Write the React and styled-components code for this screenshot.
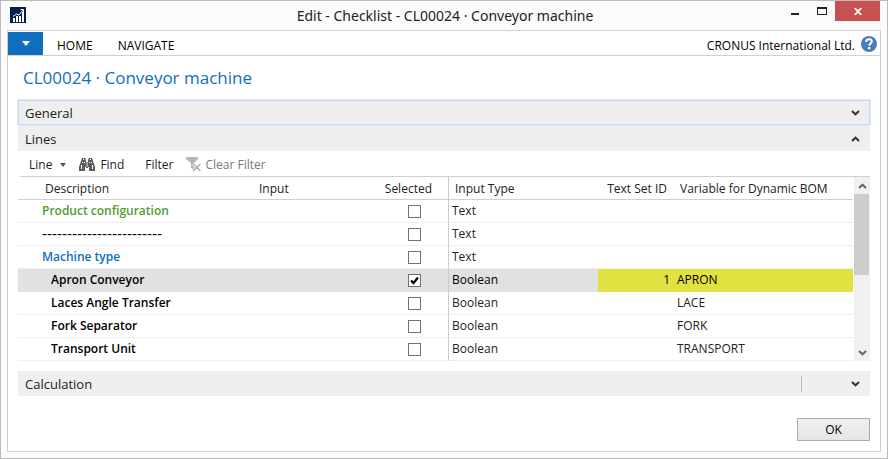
import React, { useState } from 'react';
import styled, { createGlobalStyle, css } from 'styled-components';

const GlobalStyle = createGlobalStyle`
  *, *::before, *::after { box-sizing: border-box; }
  body { margin: 0; font-family: "Open Sans", "Noto Sans", sans-serif; font-size: 12px; color: #222; background: #fbfbfb; }
  button { font: inherit; color: inherit; border: 0; padding: 0; background: none; }
  h1, h2 { margin: 0; font-weight: 400; }
`;

const Window = styled.div`
  display: flex;
  flex-direction: column;
  min-height: 100vh;
  border: 1px solid #bbb;
  background: #fbfbfb;
`;

const TitleBar = styled.header`
  display: grid;
  grid-template-columns: 1fr auto 1fr;
  height: 29px;
  padding: 0 7px 0 9px;
`;

const AppIcon = styled.svg`
  width: 16px;
  height: 16px;
  margin-top: 6px;
`;

const WindowTitle = styled.h1`
  font-family: "Noto Sans", "Open Sans", sans-serif;
  font-size: 14px;
  line-height: 29px;
`;

const Controls = styled.div`
  display: flex;
  justify-content: flex-end;
`;

const Control = styled.button`
  display: grid;
  place-items: center;
  width: ${(p) => (p.$close ? 45 : 27)}px;
  height: 20px;
  background: ${(p) => (p.$close ? '#c75050' : 'none')};
`;

const Frame = styled.main`
  display: flex;
  flex-direction: column;
  flex: 1;
  margin: 0 6px 6px;
  border: 1px solid #d0d0d0;
  background: #fff;
`;

const Ribbon = styled.nav`
  display: flex;
  align-items: center;
  height: 25px;
  padding: 1px 3px 0 0;
  border-bottom: 1px solid #d0d0d0;
  color: #000;
`;

const AppMenu = styled.button`
  display: grid;
  place-items: center;
  width: 35px;
  height: 23px;
  margin-right: 14px;
  background: #106ebe;
`;

const Tab = styled.button`
  margin-right: 25px;
  padding-top: 4px;
  line-height: 18px;
`;

const Company = styled.span`
  margin-left: auto;
  padding: 4px 6px 0 0;
  line-height: 18px;
`;

const HelpButton = styled.button`
  display: grid;
  place-items: center;
  height: 23px;
`;

const Page = styled.div`
  display: flex;
  flex-direction: column;
  flex: 1;
  padding: 0 10px 10px;
`;

const PageTitle = styled.h2`
  padding: 0 5px;
  font-size: 17px;
  line-height: 44px;
  color: #106ebe;
`;

const FastTab = styled.button`
  display: flex;
  align-items: center;
  width: 100%;
  height: 25px;
  margin-bottom: ${(p) => p.$gap || 0}px;
  padding: 0 10px 0 7px;
  background: #efefef;
  font-size: 13px;
  text-align: left;
  ${(p) => p.$focused && css`
    padding: 0 9px 0 6px;
    border: 1px solid #c3d5f0;
    outline: 1px solid #e2ebf8;
    outline-offset: 0;
  `}
`;

const FastTabName = styled.span`
  flex: 1;
`;

const Divider = styled.span`
  width: 1px;
  height: 16px;
  margin-right: 49px;
  background: #bbb;
`;

const Toolbar = styled.div`
  display: flex;
  align-items: center;
  height: 26px;
  margin-left: 2px;
  padding: 2px 0 0 9px;
  border-bottom: 1px solid #d0d0d0;
`;

const Action = styled.button`
  display: flex;
  align-items: center;
  gap: ${(p) => p.$gap || 5}px;
  margin-right: ${(p) => p.$after || 0}px;
  color: ${(p) => (p.$muted ? '#777' : '#222')};
`;

const Grid = styled.div`
  display: flex;
  gap: 1px;
  margin-bottom: 10px;
`;

const Table = styled.table`
  flex: 1;
  width: 0;
  table-layout: fixed;
  border-spacing: 0;
`;

const Col = styled.col`
  width: ${(p) => (p.$w ? `${p.$w}px` : 'auto')};
`;

const HeadCell = styled.th`
  height: 23px;
  padding: 0 ${(p) => p.$right || 0}px 0 ${(p) => p.$left || 0}px;
  border-bottom: 1px solid #d0d0d0;
  border-right: ${(p) => (p.$rule ? '1px solid #ccc' : '0')};
  font-weight: 400;
  text-align: ${(p) => p.$align || 'left'};
  white-space: nowrap;
`;

const Row = styled.tr`
  background: ${(p) => (p.$selected ? '#e1e1e1' : '#fff')};
  color: ${(p) => (p.$selected ? '#000' : '#222')};
`;

const Cell = styled.td`
  height: 23px;
  padding: 0 ${(p) => p.$right || 0}px 0 ${(p) => p.$left || 0}px;
  border-bottom: 1px solid ${(p) => (p.$selected ? '#e1e1e1' : '#eee')};
  border-right: ${(p) => (p.$rule ? '1px solid #ccc' : '0')};
  text-align: ${(p) => p.$align || 'left'};
  line-height: 18px;
  white-space: nowrap;
  ${(p) => p.$marked && css`
    background: #e1e141;
    border-bottom-color: #e1e141;
  `}
`;

const Description = styled(Cell)`
  padding-left: ${(p) => (p.$indent ? 33 : 24)}px;
  font-weight: 600;
  color: ${(p) => p.$tone || '#000'};
  ${(p) => p.$separator && css`
    font-family: "Liberation Sans", sans-serif;
    font-size: 15px;
    font-weight: 400;
  `}
`;

const CheckWrap = styled.label`
  display: inline-grid;
  place-items: center;
  vertical-align: middle;
  > * { grid-area: 1 / 1; }
  svg { pointer-events: none; }
`;

const CheckBox = styled.input`
  appearance: none;
  width: 13px;
  height: 13px;
  margin: 0;
  border: 1px solid #707070;
  background: #fff;
`;

const ScrollBar = styled.div`
  display: flex;
  flex-direction: column;
  align-items: center;
  width: 16px;
  background: #f0f0f0;
`;

const ScrollButton = styled.button`
  display: grid;
  place-items: center;
  width: 16px;
  height: 17px;
`;

const Thumb = styled.div`
  width: 15px;
  height: 44%;
  margin-right: 1px;
  margin-bottom: auto;
  background: #cdcdcd;
`;

const Footer = styled.footer`
  display: flex;
  justify-content: flex-end;
  margin-top: auto;
`;

const OkButton = styled.button`
  width: 73px;
  height: 23px;
  border: 1px solid #acacac;
  background: linear-gradient(#f0f0f0, #e5e5e5);
  color: #000;
`;

function Chevron({ up, color = '#333' }) {
  return (
    <svg width="9" height="6" viewBox="0 0 9 6" fill="none" stroke={color} strokeWidth="2" aria-hidden="true">
      <path d={up ? 'M1 5L4.500 1.700L8 5' : 'M1 1L4.500 4.300L8 1'} />
    </svg>
  );
}

function Caret({ color, width, height }) {
  return (
    <svg width={width} height={height} viewBox="0 0 8 5" preserveAspectRatio="none" aria-hidden="true">
      <path d="M0 0H8L4 5Z" fill={color} />
    </svg>
  );
}

function Binoculars() {
  return (
    <svg width="16" height="14" viewBox="0 0 16 14" aria-hidden="true">
      <path fill="#5c5c5c" d="M3 0h3l1 2v2h2V2l1-2h3l1 3 1 3 1 3v4h-6V9H9v1H7V9H6v4H0V9l1-3 1-3z" />
      <path fill="#fff" d="M4 1h1v1H4zM11 1h1v1h-1zM3 4h1v1H3zM5 4h1v1H5zM10 4h1v1h-1zM12 4h1v1h-1zM2 7h1v4H2zM13 7h1v4h-1zM7.600 4h.8v5h-.8z" />
    </svg>
  );
}

function ClearFilterIcon() {
  return (
    <svg width="16" height="15" viewBox="0 0 16 15" aria-hidden="true">
      <path d="M0 0h12v2L8 6v7l-3-2V6L0 2z" fill="#b5b5b5" />
      <path d="M7 7l7.500 7M14.500 7L7 14" stroke="#fff" strokeWidth="3" />
      <path d="M7 7l7.500 7M14.500 7L7 14" stroke="#aaa" strokeWidth="1.300" />
    </svg>
  );
}

function HelpIcon() {
  return (
    <svg width="16" height="16" viewBox="0 0 16 16" aria-hidden="true">
      <circle cx="8" cy="8" r="8" fill="#4a7db5" />
      <path d="M5.300 6V5.500C5.300 4 6.500 3.200 8 3.200S10.800 4 10.800 5.600C10.800 7.400 8.200 7.500 8.200 9.700" fill="none" stroke="#fff" strokeWidth="2" />
      <path d="M7 11h2.300v2.200H7z" fill="#fff" />
    </svg>
  );
}

const ROWS = [
  { text: 'Product configuration', tone: '#4f9d2f', type: 'Text' },
  { text: '------------------------', separator: true, type: 'Text' },
  { text: 'Machine type', tone: '#106ebe', type: 'Text' },
  { text: 'Apron Conveyor', indent: true, type: 'Boolean', setId: '1', variable: 'APRON', selected: true },
  { text: 'Laces Angle Transfer', indent: true, type: 'Boolean', variable: 'LACE' },
  { text: 'Fork Separator', indent: true, type: 'Boolean', variable: 'FORK' },
  { text: 'Transport Unit', indent: true, type: 'Boolean', variable: 'TRANSPORT' },
];

function LineRow({ row }) {
  const [checked, setChecked] = useState(Boolean(row.selected));
  const s = row.selected;
  return (
    <Row $selected={s}>
      <Description $selected={s} $indent={row.indent} $tone={row.tone} $separator={row.separator}>{row.text}</Description>
      <Cell $selected={s} />
      <Cell $selected={s} $rule $align="center">
        <CheckWrap>
          <CheckBox
            type="checkbox"
            aria-label={`Selected: ${row.text}`}
            checked={checked}
            onChange={(e) => setChecked(e.target.checked)}
          />
          {checked && (
            <svg width="9" height="9" viewBox="0 0 9 9" aria-hidden="true">
              <path d="M1 4.500L3.500 7L8 1.500" fill="none" stroke="#000" strokeWidth="2.200" />
            </svg>
          )}
        </CheckWrap>
      </Cell>
      <Cell $selected={s} $left={3}>{row.type}</Cell>
      <Cell $selected={s} $marked={s} $align="right" $right={2}>{row.setId}</Cell>
      <Cell $selected={s} $marked={s} $left={5}>{row.variable}</Cell>
    </Row>
  );
}

export default function App() {
  return (
    <Window>
      <GlobalStyle />
      <TitleBar>
        <AppIcon viewBox="0 0 16 16" aria-hidden="true">
          <path fill="#00204d" d="M0 0h16v16H0z" />
          <path fill="#fff" d="M3 11h2v4H3zM6 9h2v6H6zM9 9h2v6H9zM12 5h2v10h-2z" />
          <path fill="none" stroke="#fff" d="M3 9.500L6.500 7L9 8L13 3M10.500 2.500H13.500V5" />
        </AppIcon>
        <WindowTitle>Edit - Checklist - CL00024 · Conveyor machine</WindowTitle>
        <Controls>
          <Control aria-label="Minimize">
            <svg width="8" height="8" viewBox="0 0 8 8"><path d="M0 6h8v2H0z" fill="#222" /></svg>
          </Control>
          <Control aria-label="Maximize">
            <svg width="10" height="8" viewBox="0 0 10 8"><path d="M0 0h10v8H0zM1 2v5h8V2z" fill="#222" fillRule="evenodd" /></svg>
          </Control>
          <Control $close aria-label="Close">
            <svg width="8" height="7" viewBox="0 0 8 7"><path d="M.7 0L7.300 7M7.300 0L.7 7" stroke="#fff" strokeWidth="1.800" /></svg>
          </Control>
        </Controls>
      </TitleBar>
      <Frame>
        <Ribbon>
          <AppMenu aria-label="Application menu"><Caret color="#fff" width={8} height={5} /></AppMenu>
          <Tab>HOME</Tab>
          <Tab>NAVIGATE</Tab>
          <Company>CRONUS International Ltd.</Company>
          <HelpButton aria-label="Help"><HelpIcon /></HelpButton>
        </Ribbon>
        <Page>
          <PageTitle>CL00024 · Conveyor machine</PageTitle>
          <FastTab $focused $gap={1} aria-expanded="false">
            <FastTabName>General</FastTabName>
            <Chevron />
          </FastTab>
          <FastTab aria-expanded="true">
            <FastTabName>Lines</FastTabName>
            <Chevron up />
          </FastTab>
          <Toolbar>
            <Action $gap={8} $after={13}>Line<Caret color="#555" width={6} height={4} /></Action>
            <Action $after={21}><Binoculars />Find</Action>
            <Action $after={12}>Filter</Action>
            <Action $gap={4} $muted><ClearFilterIcon />Clear Filter</Action>
          </Toolbar>
          <Grid>
            <Table>
              <colgroup>
                <Col $w={234} /><Col $w={129} /><Col $w={68} /><Col $w={149} /><Col $w={74} /><Col />
              </colgroup>
              <thead>
                <tr>
                  <HeadCell $left={27}>Description</HeadCell>
                  <HeadCell $left={7}>Input</HeadCell>
                  <HeadCell $rule $align="right" $right={16}>Selected</HeadCell>
                  <HeadCell $left={6}>Input Type</HeadCell>
                  <HeadCell $align="right" $right={5}>Text Set ID</HeadCell>
                  <HeadCell $left={8}>Variable for Dynamic BOM</HeadCell>
                </tr>
              </thead>
              <tbody>
                {ROWS.map((row) => <LineRow key={row.text} row={row} />)}
              </tbody>
            </Table>
            <ScrollBar>
              <ScrollButton aria-label="Scroll up"><Chevron up color="#666" /></ScrollButton>
              <Thumb />
              <ScrollButton aria-label="Scroll down"><Chevron color="#666" /></ScrollButton>
            </ScrollBar>
          </Grid>
          <FastTab aria-expanded="false">
            <FastTabName>Calculation</FastTabName>
            <Divider />
            <Chevron />
          </FastTab>
          <Footer><OkButton>OK</OkButton></Footer>
        </Page>
      </Frame>
    </Window>
  );
}
